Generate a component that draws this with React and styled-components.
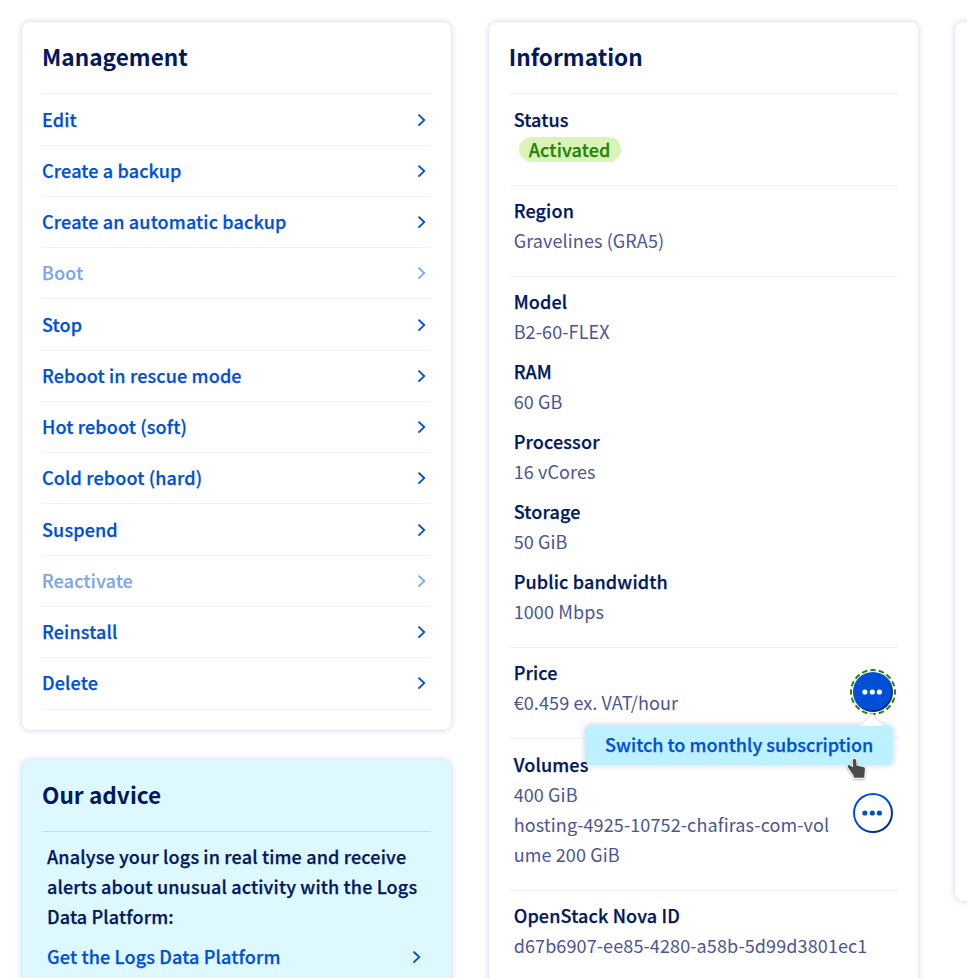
import React from 'react';
import styled, { createGlobalStyle, css } from 'styled-components';

const navy = '#00185e';
const blue = '#0050d7';

const semibold = css`
  font-weight: 500;
  -webkit-text-stroke: 0.25px currentColor;
`;

const GlobalStyle = createGlobalStyle`
  *, *::before, *::after { box-sizing: border-box; }
  html, body { margin: 0; padding: 0; height: 978px; overflow: hidden; background: #fff; }
  body { font-family: 'Noto Sans CJK SC', 'Noto Sans', sans-serif; font-size: 18px; line-height: 30px; }
  h2, p, dl, dt, dd, ul { margin: 0; padding: 0; }
`;

const Page = styled.main`
  display: grid;
  grid-template-columns: repeat(3, 429.34px);
  column-gap: 37.33px;
  align-items: start;
  width: 100%;
  height: 978px;
  overflow: hidden;
  padding: 22px;
`;

const Column = styled.div`
  display: flex;
  flex-direction: column;
  gap: 30.2px;
`;

const Card = styled.section`
  min-height: ${p => p.$minHeight || 0}px;
  padding: 20px;
  border-radius: 8px;
  background: ${p => (p.$advice ? '#def8ff' : '#fff')};
  box-shadow: 0 0 6px rgba(0, 0, 165, 0.2);
`;

const CardTitle = styled.h2`
  height: 51.45px;
  line-height: 29px;
  font-size: 22.6px;
  font-weight: 700;
  letter-spacing: 0.03px;
  color: ${navy};
`;

const ActionList = styled.ul`
  list-style: none;
  border-top: 1px solid #f2f2f2;
`;

const ActionLabel = styled.span`
  padding-bottom: 2px;
`;

const ActionItem = styled.li`
  display: flex;
  align-items: center;
  justify-content: space-between;
  height: 51.25px;
  padding-right: 5px;
  border-bottom: 1px solid #f2f2f2;
  ${semibold}
  letter-spacing: 0.14px;
  color: ${blue};
  & > * { opacity: ${p => (p.$disabled ? 0.5 : 1)}; }
  &:last-child { height: 51.5px; }
`;

const AdviceBody = styled.div`
  padding: 9px 5px 0;
  border-top: 1px solid #b3e3ee;
  ${semibold}
  letter-spacing: 0.15px;
  color: ${navy};
`;

const AdviceLink = styled.div`
  display: flex;
  align-items: center;
  justify-content: space-between;
  margin-top: 10px;
  padding-right: 5px;
  color: ${blue};
  svg { margin-top: 2px; }
`;

const InfoSection = styled.dl`
  display: flex;
  align-items: center;
  justify-content: space-between;
  padding: 9.25px 5px 21px;
  border-top: 1px solid #f2f2f2;
`;

const Fields = styled.div`
  display: grid;
  gap: 10px;
  width: ${p => (p.$narrow ? '322px' : 'auto')};
`;

const Label = styled.dt`
  ${semibold}
  letter-spacing: 0.15px;
  color: ${navy};
`;

const Value = styled.dd`
  letter-spacing: 0.11px;
  color: #4d5592;
  word-break: break-all;
`;

const Badge = styled.span`
  display: block;
  width: 102px;
  height: 25px;
  margin: 3px 0 2px 5px;
  border-radius: 13px;
  background: #daf3b9;
  color: #268403;
  ${semibold}
  letter-spacing: 0.15px;
  line-height: 24px;
  text-align: center;
`;

const MenuAnchor = styled.div`
  position: relative;
  height: 40px;
  margin-top: 8.5px;
`;

const RoundButton = styled.button`
  display: flex;
  align-items: center;
  justify-content: center;
  width: 40px;
  height: 40px;
  padding: 0 1px 0 0;
  border: 2px solid transparent;
  border-radius: 50%;
  color: ${p => (p.$active ? '#fff' : blue)};
  background:
    linear-gradient(${p => (p.$active ? `${blue}, ${blue}` : '#fff, #fff')}) padding-box,
    linear-gradient(135deg, ${blue} 50%, #002e85 78%) border-box;
`;

const FocusRing = styled.svg`
  position: absolute;
  top: -3px;
  left: -3px;
`;

const Popover = styled.div`
  position: absolute;
  z-index: 2;
  top: 53px;
  right: 0;
  width: 307.5px;
  height: 40px;
  border-radius: 6px;
  background: #bef1ff;
  box-shadow: 0 0 6px rgba(0, 0, 165, 0.2);
  color: ${blue};
  ${semibold}
  line-height: 38px;
  text-align: center;
  white-space: nowrap;
`;

const PopoverArrow = styled.svg`
  position: absolute;
  top: -12px;
  right: 7px;
`;

const Pointer = styled.svg`
  position: absolute;
  top: 31px;
  right: 25px;
  filter: drop-shadow(0 1px 1px rgba(0, 0, 0, 0.3));
`;

const Chevron = () => (
  <svg width="9" height="14" viewBox="0 0 9 14" fill="none" stroke={blue} strokeWidth="1.9">
    <path d="M1.5 1.6 7.2 7.1 1.5 12.6" />
  </svg>
);

const Dots = () => (
  <svg width="20" height="6" viewBox="0 0 20 6" fill="currentColor">
    <circle cx="2.9" cy="3" r="2.6" />
    <circle cx="10.3" cy="3" r="2.6" />
    <circle cx="17.4" cy="3" r="2.6" />
  </svg>
);

const actions = [
  ['Edit'], ['Create a backup'], ['Create an automatic backup'], ['Boot', true], ['Stop'],
  ['Reboot in rescue mode'], ['Hot reboot (soft)'], ['Cold reboot (hard)'], ['Suspend'],
  ['Reactivate', true], ['Reinstall'], ['Delete'],
];

const specs = [
  ['Model', 'B2-60-FLEX'], ['RAM', '60 GB'], ['Processor', '16 vCores'],
  ['Storage', '50 GiB'], ['Public bandwidth', '1000 Mbps'],
];

const Field = ({ label, children }) => (
  <div>
    <Label>{label}</Label>
    {children}
  </div>
);

export default function App() {
  return (
    <Page>
      <GlobalStyle />
      <Column>
        <Card>
          <CardTitle>Management</CardTitle>
          <ActionList>
            {actions.map(([name, disabled]) => (
              <ActionItem key={name} $disabled={disabled}>
                <ActionLabel>{name}</ActionLabel>
                <Chevron />
              </ActionItem>
            ))}
          </ActionList>
        </Card>
        <Card $advice $minHeight={260}>
          <CardTitle>Our advice</CardTitle>
          <AdviceBody>
            <p>Analyse your logs in real time and receive alerts about unusual activity with the Logs Data Platform:</p>
            <AdviceLink>
              <span>Get the Logs Data Platform</span>
              <Chevron />
            </AdviceLink>
          </AdviceBody>
        </Card>
      </Column>
      <Card $minHeight={1000}>
        <CardTitle>Information</CardTitle>
        <InfoSection>
          <Field label="Status"><dd><Badge>Activated</Badge></dd></Field>
        </InfoSection>
        <InfoSection>
          <Field label="Region"><Value>Gravelines (GRA5)</Value></Field>
        </InfoSection>
        <InfoSection>
          <Fields>
            {specs.map(([label, value]) => (
              <Field key={label} label={label}><Value>{value}</Value></Field>
            ))}
          </Fields>
        </InfoSection>
        <InfoSection>
          <Field label="Price"><Value>€0.459 ex. VAT/hour</Value></Field>
          <MenuAnchor>
            <RoundButton $active aria-label="Price actions"><Dots /></RoundButton>
            <FocusRing width="46" height="46" viewBox="0 0 46 46" fill="none" stroke="#268403" strokeWidth="2">
              <circle cx="23" cy="23" r="22" pathLength="160" strokeDasharray="6.4 3.6" strokeDashoffset="3.2" />
            </FocusRing>
            <Popover>
              <PopoverArrow width="28" height="13" viewBox="0 0 28 13">
                <path d="M1 13 14 1 27 13" fill="#fff" stroke="#e6e6f6" strokeWidth="1.5" />
              </PopoverArrow>
              Switch to monthly subscription
              <Pointer width="24" height="25" viewBox="0 0 24 25">
                <path
                  d="M8.7 4.5c0-2 3.3-2 3.5 0l.4 5 6.6 1.6c1.3.4 1.9 1.1 1.7 2.4l-.7 8.3H9.8V20L3.9 11.2c-.9-1.5.3-2.6 1.8-1.9l3.4 2Z"
                  fill="#4a4a4a" stroke="#fff" strokeWidth="1.8" strokeLinejoin="round" paintOrder="stroke"
                />
              </Pointer>
            </Popover>
          </MenuAnchor>
        </InfoSection>
        <InfoSection>
          <Fields $narrow>
            <Field label="Volumes">
              <Value>400 GiB</Value>
              <Value>hosting-4925-10752-chafiras-com-volume 200 GiB</Value>
            </Field>
          </Fields>
          <MenuAnchor>
            <RoundButton aria-label="Volume actions"><Dots /></RoundButton>
          </MenuAnchor>
        </InfoSection>
        <InfoSection>
          <Field label="OpenStack Nova ID"><Value>d67b6907-ee85-4280-a58b-5d99d3801ec1</Value></Field>
        </InfoSection>
      </Card>
      <Card $minHeight={879.2} />
    </Page>
  );
}
